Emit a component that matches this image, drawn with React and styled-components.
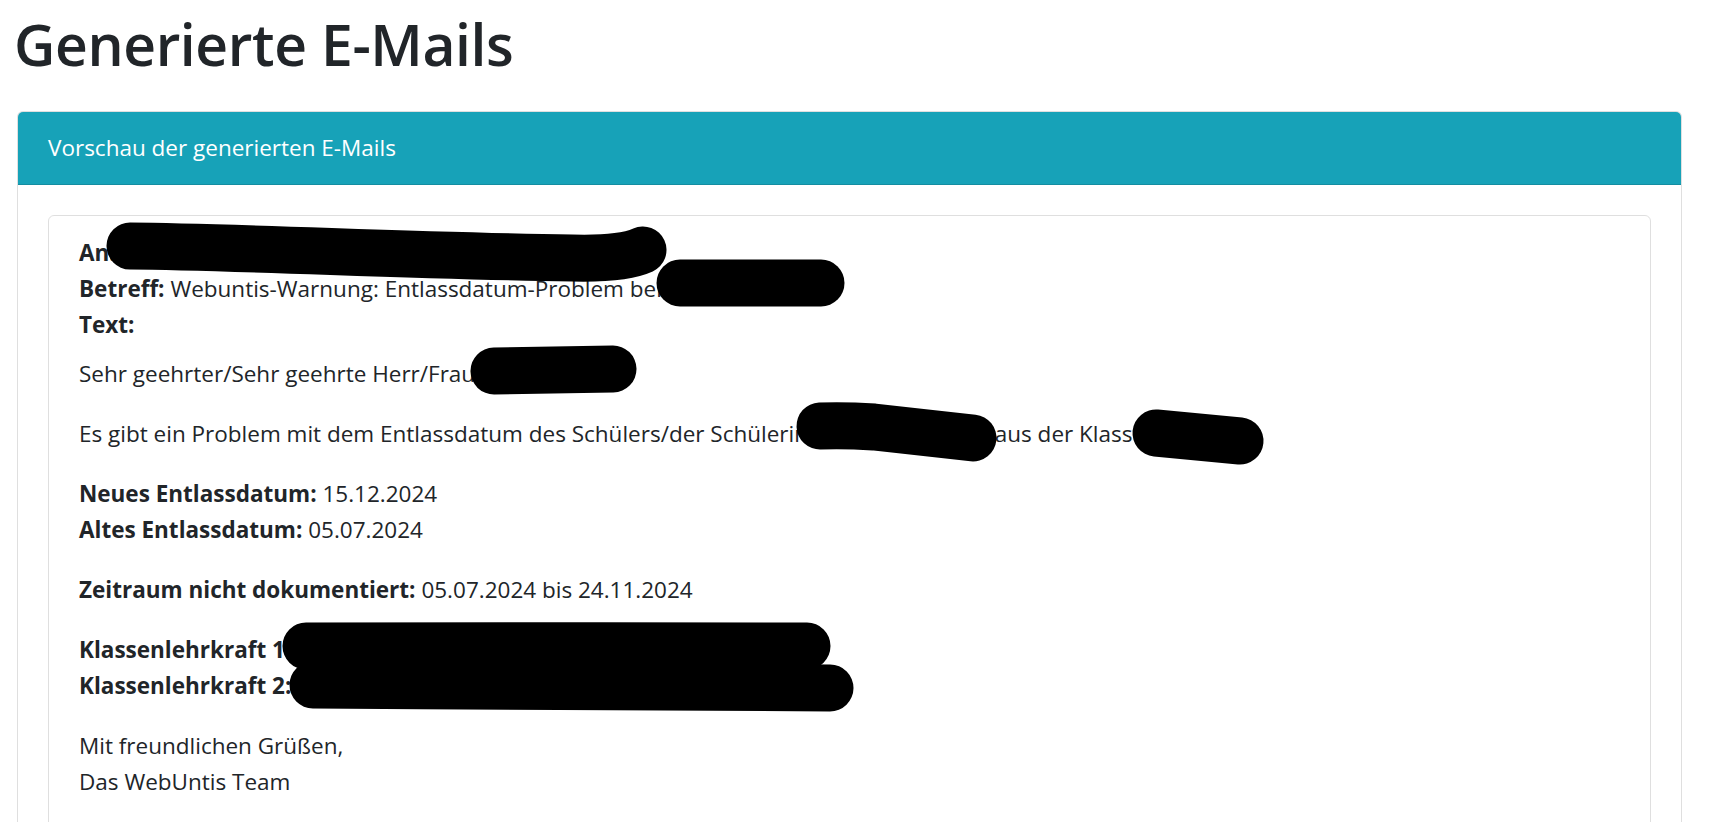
import React from "react";
import styled, { createGlobalStyle } from "styled-components";

const GlobalStyle = createGlobalStyle`
  html, body {
    margin: 0;
    padding: 0;
    background: #ffffff;
  }
  body {
    font-family: "Open Sans", "Noto Sans", "Liberation Sans", sans-serif;
    color: #212529;
    -webkit-font-smoothing: antialiased;
  }
`;

const Page = styled.div`
  position: relative;
  padding: 0 44px 0 17px;
  height: 822px;
  overflow: hidden;
`;

const Title = styled.h1`
  margin: 9px 0 32px -3px;
  font-size: 57px;
  line-height: 70px;
  font-weight: 600;
  letter-spacing: -0.4px;
  color: #212529;
`;

const Card = styled.section`
  border: 1px solid rgba(0, 0, 0, 0.125);
  border-radius: 6px;
  background: #fff;
`;

const CardHeader = styled.header`
  background: #17a2b8;
  color: #ffffff;
  padding: 18px 30px;
  font-size: 22.5px;
  line-height: 36px;
  border-bottom: 1px solid rgba(0, 0, 0, 0.125);
  border-radius: 5px 5px 0 0;
`;

const CardBody = styled.div`
  padding: 30px;
`;

const MailCard = styled.article`
  border: 1px solid rgba(0, 0, 0, 0.125);
  border-radius: 6px;
  padding: 19px 30px 30px;
  font-size: 22.5px;
  line-height: 36px;
`;

const Meta = styled.div`
  margin-bottom: 13px;
`;

const Para = styled.p`
  margin: 0 0 24px;
`;

const Label = styled.strong`
  font-weight: 700;
`;

const Redacted = styled.span`
  display: inline-block;
  position: relative;
  width: ${(p) => p.$w}px;
  height: 0;
  vertical-align: baseline;
`;

const Marker = styled.svg`
  position: absolute;
  left: 0;
  top: 0;
  width: 1px;
  height: 1px;
  overflow: visible;
`;

const Blot = ({ w = 0, d, thick = 47 }) => (
  <Redacted $w={w}>
    <Marker viewBox="0 0 1 1" aria-hidden="true">
      <path
        d={d}
        fill="none"
        stroke="#000"
        strokeWidth={thick}
        strokeLinecap="round"
        strokeLinejoin="round"
      />
    </Marker>
  </Redacted>
);

export default function App() {
  return (
    <>
      <GlobalStyle />
      <Page>
        <Title>Generierte E-Mails</Title>
        <Card>
          <CardHeader>Vorschau der generierten E-Mails</CardHeader>
          <CardBody>
            <MailCard>
              <Meta>
                <Label>An:</Label>{" "}
                <Blot w={520} d="M8 -15 C 120 -14, 300 -5, 450 -3 C 490 -2, 510 -6, 521 -11" />
                <br />
                <Label>Betreff:</Label> Webuntis-Warnung: Entlassdatum-Problem bei{" "}
                <Blot w={160} d="M12 -14 L153 -14" />
                <br />
                <Label>Text:</Label>
              </Meta>
              <Para>
                Sehr geehrter/Sehr geehrte Herr/Frau <Blot w={140} d="M13 -11 L132 -13" />
              </Para>
              <Para>
                Es gibt ein Problem mit dem Entlassdatum des Schülers/der Schülerin{" "}
                <Blot w={175} d="M6 -16 C 30 -17, 45 -16, 60 -15 L159 -4" /> aus der Klasse{" "}
                <Blot w={90} d="M5 -9 L89 -1" />
              </Para>
              <Para>
                <Label>Neues Entlassdatum:</Label> 15.12.2024
                <br />
                <Label>Altes Entlassdatum:</Label> 05.07.2024
              </Para>
              <Para>
                <Label>Zeitraum nicht dokumentiert:</Label> 05.07.2024 bis 24.11.2024
              </Para>
              <Para>
                <Label>Klassenlehrkraft 1:</Label>{" "}
                <Blot w={520} d="M9 -12 C 150 -13, 350 -12, 510 -12" />
                <br />
                <Label>Klassenlehrkraft 2:</Label>{" "}
                <Blot w={540} d="M16 -9 C 200 -8, 400 -6, 533 -6" />
              </Para>
              <Para>
                Mit freundlichen Grüßen,
                <br />
                Das WebUntis Team
              </Para>
            </MailCard>
          </CardBody>
        </Card>
      </Page>
    </>
  );
}
